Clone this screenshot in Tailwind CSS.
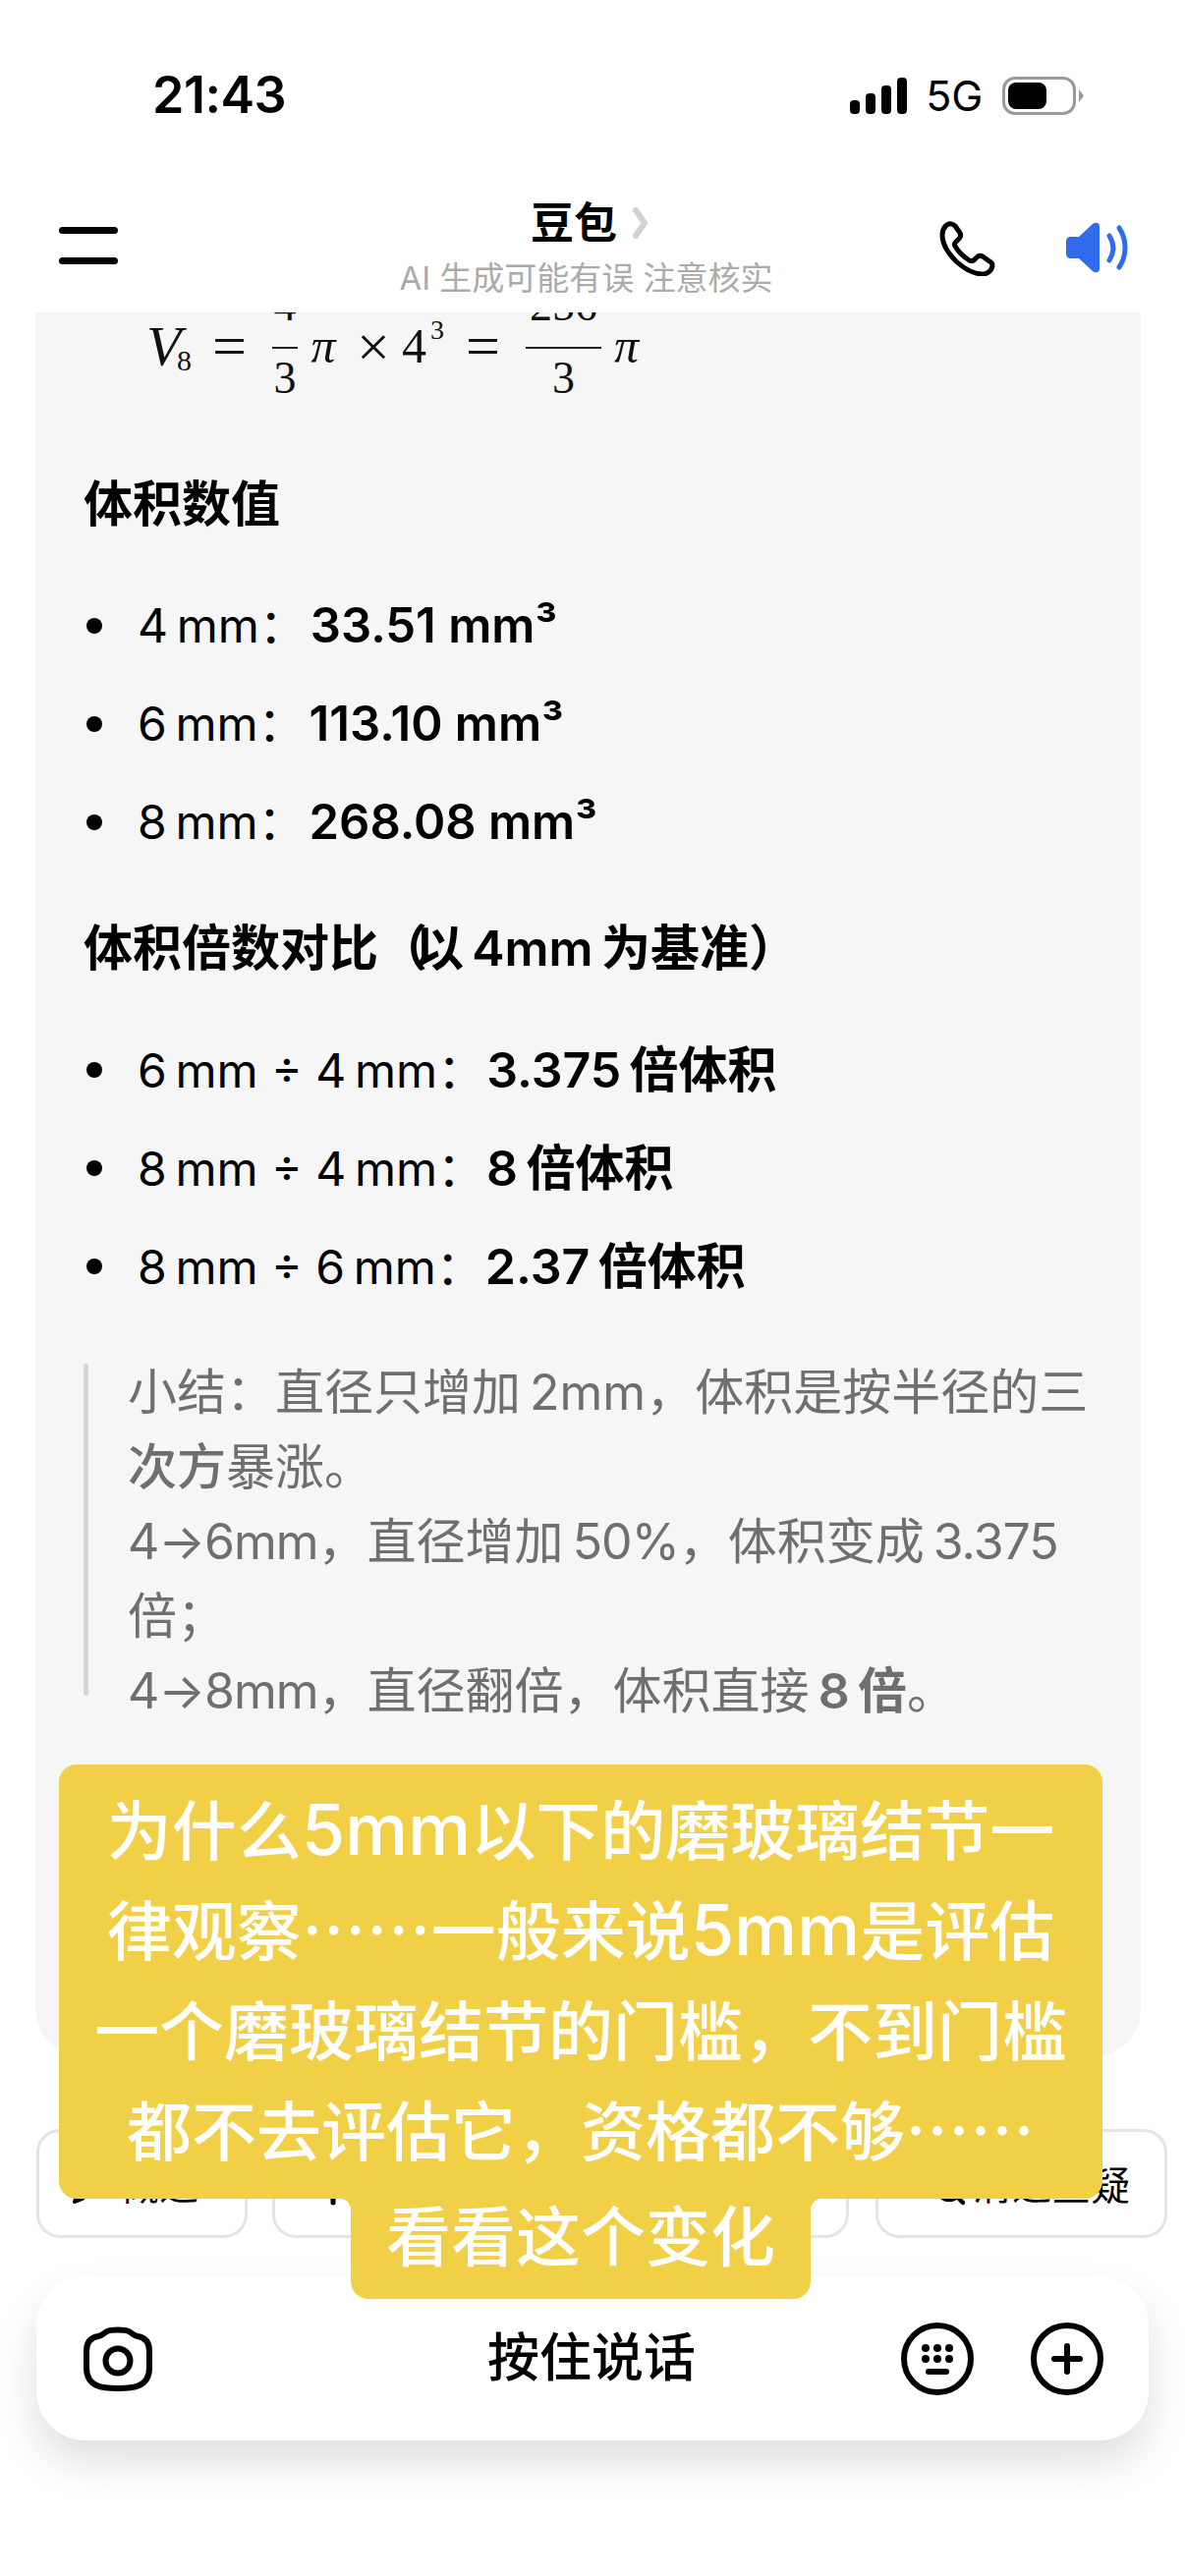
<!DOCTYPE html>
<html lang="zh-CN">
<head>
    <meta charset="UTF-8">
    <meta name="viewport" content="width=device-width, initial-scale=1.0">
    <title>豆包</title>
    <script src="https://cdn.jsdelivr.net/npm/@tailwindcss/browser@4"></script>
</head>
<body class="bg-white font-['Inter','Noto_Sans_CJK_SC',sans-serif] text-black">
<div class="relative w-[1206px] h-[2622px] overflow-hidden bg-white">

    <!-- Status bar -->
    <div class="flex items-center h-[190px] pt-[4px] pl-[155px]">
        <span class="text-[52px] leading-none font-semibold tracking-[-0.5px]">21:43</span>
        <div class="flex items-end gap-[6px] ml-[574px]">
            <div class="w-[10px] h-[14px] rounded-[4px] bg-black"></div>
            <div class="w-[10px] h-[21px] rounded-[4px] bg-black"></div>
            <div class="w-[10px] h-[29px] rounded-[4px] bg-black"></div>
            <div class="w-[10px] h-[37px] rounded-[4px] bg-black"></div>
        </div>
        <span class="ml-[19px] text-[43px] leading-none font-normal">5G</span>
        <div class="flex items-center ml-[20px]">
            <div class="w-[75px] h-[39px] box-border border-[3px] border-[#9a9a9a] rounded-[13px] p-[3px]">
                <div class="w-[39px] h-[27px] rounded-[8px] bg-black"></div>
            </div>
            <svg class="ml-[3px]" width="5" height="13" viewBox="0 0 5 13"><path d="M0 0 L5 6.5 L0 13 Z" fill="#9a9a9a"/></svg>
        </div>
    </div>

    <!-- Header -->
    <div class="flex items-start h-[128px] pl-[60px] pr-[57px]">
        <div class="flex flex-col gap-[24px] w-[60px] mt-[41px]">
            <div class="h-[7px] rounded-full bg-black"></div>
            <div class="h-[7px] rounded-full bg-black"></div>
        </div>
        <div class="flex flex-col items-center w-[377px] ml-[288px] pt-[9px]">
            <div class="flex items-center ml-[8px] h-[56px]">
                <span class="text-[44px] leading-[56px] font-semibold">豆包</span>
                <svg class="ml-[15px]" width="18" height="32" viewBox="0 0 18 32" fill="none"><path d="M4 3 L13 16 L4 29" stroke="#d2d2d2" stroke-width="6" stroke-linecap="round" stroke-linejoin="round"/></svg>
            </div>
            <span class="text-[33px] leading-[56px] text-[#ababab] whitespace-nowrap">AI 生成可能有误 注意核实</span>
        </div>
        <svg class="ml-[171px] mt-[35px]" width="57" height="56" viewBox="0 0 57 56" fill="none"><path d="M12 3 C8 2 3 7 3 14 C3 22 8 32 17 41 C26 49 36 54 44 54 C50 54 54 49 54 45 C54 43 53 42 51 41 L44 36 C42 35 40 35 38 37 L35 40 C33 41 31 41 29 39 C26 37 20 32 17 27 C15 25 15 23 17 21 L20 18 C22 16 22 14 21 12 L16 5 C15 4 14 3 12 3 Z" stroke="#000" stroke-width="5" stroke-linejoin="round"/></svg>
        <svg class="ml-[72px] mt-[36px]" width="64" height="52" viewBox="0 0 64 52" fill="none">
            <path d="M34 5 C34 0 30 0 27 2 L13 15 H5 C2 15 0 17 0 20 V32 C0 35 2 37 5 37 H13 L27 50 C30 52 34 52 34 47 Z" fill="#2f6bec"/>
            <path d="M44 14 C49 22 49 31 44 39" stroke="#2f6bec" stroke-width="5" stroke-linecap="round"/>
            <path d="M54 6 C62 18 62 34 54 46" stroke="#2f6bec" stroke-width="5" stroke-linecap="round"/>
        </svg>
    </div>

    <!-- Answer card -->
    <div class="w-[1125px] h-[1775px] ml-[36px] pl-[49px] bg-[#f6f6f6] rounded-b-[48px] overflow-hidden">
        <!-- Formula, top of it scrolled under the header -->
        <div class="flex items-center h-[136px] -mt-[32px] ml-[64px] font-['Liberation_Serif',serif] text-[46px] text-[#111]">
            <span class="italic text-[58px] w-[31px] -mt-[4px]">V</span>
            <span class="text-[30px] w-[36px] mt-[24px]">8</span>
            <span class="w-[34px] text-center text-[62px] -mt-[3px]">=</span>
            <div class="flex flex-col items-center w-[26px] ml-[27px]">
                <span class="leading-[50px] h-[50px] mb-[17px]">4</span>
                <div class="w-full h-[2px] bg-[#222]"></div>
                <span class="leading-[50px] h-[50px] mt-[5px] mb-[12px]">3</span>
            </div>
            <span class="w-[26px] ml-[13px] text-center italic text-[50px] leading-none -mt-[4px]">π</span>
            <span class="w-[25px] ml-[21px] text-center text-[60px] leading-none -mt-[3px]">×</span>
            <span class="ml-[21px] text-[50px] -mt-[3px]">4</span>
            <span class="text-[28px] -mt-[36px] ml-[4px]">3</span>
            <span class="w-[34px] ml-[22px] text-center text-[62px] -mt-[3px]">=</span>
            <div class="flex flex-col items-center w-[77px] ml-[27px]">
                <span class="leading-[50px] h-[50px] mb-[17px]">256</span>
                <div class="w-full h-[2px] bg-[#222]"></div>
                <span class="leading-[50px] h-[50px] mt-[5px] mb-[12px]">3</span>
            </div>
            <span class="w-[27px] ml-[12px] text-center italic text-[50px] leading-none -mt-[4px]">π</span>
        </div>

        <h3 class="mt-[53px] text-[50px] leading-[76px] font-semibold">体积数值</h3>
        <ul class="mt-[48px] flex flex-col gap-[24px] text-[48px] leading-[76px]">
            <li class="flex items-center h-[76px]"><span class="w-[16px] h-[16px] ml-[3px] mr-[36px] rounded-full bg-black"></span><span>4&thinsp;mm：<b class="ml-[4px] font-semibold text-[49px]">33.51 mm³</b></span></li>
            <li class="flex items-center h-[76px]"><span class="w-[16px] h-[16px] ml-[3px] mr-[36px] rounded-full bg-black"></span><span>6&thinsp;mm：<b class="ml-[4px] font-semibold text-[49px]">113.10 mm³</b></span></li>
            <li class="flex items-center h-[76px]"><span class="w-[16px] h-[16px] ml-[3px] mr-[36px] rounded-full bg-black"></span><span>8&thinsp;mm：<b class="ml-[4px] font-semibold text-[49px]">268.08 mm³</b></span></li>
        </ul>

        <h3 class="mt-[52px] text-[50px] leading-[76px] font-semibold">体积倍数对比<span class="tracking-[-13px]">（</span>以&thinsp;4mm&thinsp;为基准）</h3>
        <ul class="mt-[48px] flex flex-col gap-[24px] text-[48px] leading-[76px]">
            <li class="flex items-center h-[76px]"><span class="w-[16px] h-[16px] ml-[3px] mr-[36px] rounded-full bg-black"></span><span>6&thinsp;mm ÷ 4&thinsp;mm：<b class="ml-[2px] font-semibold text-[50px]">3.375&thinsp;倍体积</b></span></li>
            <li class="flex items-center h-[76px]"><span class="w-[16px] h-[16px] ml-[3px] mr-[36px] rounded-full bg-black"></span><span>8&thinsp;mm ÷ 4&thinsp;mm：<b class="ml-[2px] font-semibold text-[50px]">8&thinsp;倍体积</b></span></li>
            <li class="flex items-center h-[76px]"><span class="w-[16px] h-[16px] ml-[3px] mr-[36px] rounded-full bg-black"></span><span>8&thinsp;mm ÷ 6&thinsp;mm：<b class="ml-[2px] font-semibold text-[50px]">2.37&thinsp;倍体积</b></span></li>
        </ul>

        <blockquote class="flex items-start mt-[52px]">
            <div class="w-[5px] h-[338px] mt-[9px] rounded-full bg-[#d5d5d5] shrink-0"></div>
            <p class="ml-[40px] text-[50px] leading-[76px] text-[#6f6f6f] whitespace-nowrap">小结：直径只增加&thinsp;2mm，体积是按半径的三<br><b class="font-medium">次方</b>暴涨。<br><span class="tracking-[-1px]">4→6mm</span>，直径增加&thinsp;<span class="tracking-[-1px]">50%</span>，体积变成&thinsp;<span class="tracking-[-1px]">3.375</span><br>倍；<br><span class="tracking-[-1px]">4→8mm</span>，直径翻倍，体积直接&thinsp;<b class="font-semibold">8&thinsp;倍</b>。</p>
        </blockquote>
    </div>

    <!-- Suggestion chips -->
    <div class="flex mt-[74px] ml-[37px] h-[111px] text-[40px]">
        <div class="flex items-center w-[215px] box-border border-[3px] border-[#e4e4e4] rounded-[24px] pl-[30px] pt-[4px]">
            <svg width="34" height="40" viewBox="0 0 34 40" fill="none"><path d="M6 36 L9 28 L26 9 L31 14 L14 33 Z" stroke="#000" stroke-width="4" stroke-linejoin="round"/></svg>
            <span class="ml-[18px] whitespace-nowrap">概述</span>
            <svg class="ml-[12px] mt-[6px]" width="8" height="14" viewBox="0 0 8 14" fill="none"><path d="M1 1 L7 7 L1 13" stroke="#000" stroke-width="2"/></svg>
        </div>
        <div class="flex items-center w-[587px] ml-[25px] box-border border-[3px] border-[#e4e4e4] rounded-[24px] pl-[44px] pt-[4px]">
            <svg width="30" height="40" viewBox="0 0 30 40" fill="none"><path d="M15 4 V37" stroke="#000" stroke-width="5" stroke-linecap="round"/><path d="M4 16 H26" stroke="#000" stroke-width="4" stroke-linecap="round"/></svg>
            <span class="ml-[20px] whitespace-nowrap">帮我继续深入解释</span>
        </div>
        <div class="flex items-center justify-end w-[297px] ml-[27px] box-border border-[3px] border-[#e4e4e4] rounded-[24px] pr-[35px] pt-[4px]">
            <svg width="30" height="40" viewBox="0 0 30 40" fill="none"><circle cx="14" cy="22" r="12" stroke="#000" stroke-width="4.5"/><path d="M22 31 L28 37" stroke="#000" stroke-width="4.5" stroke-linecap="round"/></svg>
            <span class="ml-[8px] whitespace-nowrap">清退查疑</span>
        </div>
    </div>

    <!-- Input bar -->
    <div class="flex items-center w-[1132px] h-[167px] mt-[39px] ml-[37px] pl-[48px] pr-[46px] bg-white rounded-[50px] shadow-[0_22px_46px_rgba(0,0,0,0.13)]">
        <svg width="70" height="66" viewBox="0 0 70 66" fill="none">
            <path d="M35 63 C20 63 3 62 3 42 V25 C3 14 9 11 15 10 C20 9 21 6 24 5 C27 3 43 3 46 5 C49 6 50 9 55 10 C61 11 67 14 67 25 V42 C67 62 50 63 35 63 Z" stroke="#000" stroke-width="6" stroke-linejoin="round"/>
            <circle cx="35" cy="35" r="12.5" stroke="#000" stroke-width="6"/>
        </svg>
        <span class="ml-[341px] text-[53px] leading-none font-medium whitespace-nowrap">按住说话</span>
        <svg class="ml-auto" width="74" height="74" viewBox="0 0 74 74" fill="none">
            <circle cx="37" cy="37" r="34" stroke="#000" stroke-width="6"/>
            <circle cx="25" cy="26" r="4" fill="#000"/><circle cx="37" cy="26" r="4" fill="#000"/><circle cx="49" cy="26" r="4" fill="#000"/>
            <circle cx="25" cy="37" r="4" fill="#000"/><circle cx="37" cy="37" r="4" fill="#000"/><circle cx="49" cy="37" r="4" fill="#000"/>
            <path d="M28 50 H46" stroke="#000" stroke-width="6" stroke-linecap="round"/>
        </svg>
        <svg class="ml-[58px]" width="74" height="74" viewBox="0 0 74 74" fill="none">
            <circle cx="37" cy="37" r="34" stroke="#000" stroke-width="6"/>
            <path d="M37 24 V50 M24 37 H50" stroke="#000" stroke-width="6" stroke-linecap="round"/>
        </svg>
    </div>

    <!-- Video caption lying over the page -->
    <div class="absolute left-[60px] top-[1796px] w-[1062px] flex flex-col items-center text-white text-[66px] leading-[102px] font-medium text-center font-['Noto_Sans_CJK_SC',sans-serif]">
        <div class="w-full h-[442px] pt-[12px] bg-[#f1cf47] rounded-[18px] whitespace-nowrap">
            为什么<span class="font-['Inter'] text-[72px] leading-none">5mm</span>以下的磨玻璃结节一<br>律观察……一般来说<span class="font-['Inter'] text-[72px] leading-none">5mm</span>是评估<br>一个磨玻璃结节的门槛，不到门槛<br>都不去评估它，资格都不够……
        </div>
        <div class="relative w-[468px] h-[103px] -mt-[1px] bg-[#f1cf47] rounded-b-[18px]">
            <span class="block -mt-[16px] whitespace-nowrap">看看这个变化</span>
            <div class="absolute -left-[12px] top-[1px] w-[12px] h-[12px] bg-[radial-gradient(circle_at_0_100%,transparent_12px,#f1cf47_12.5px)]"></div>
            <div class="absolute -right-[12px] top-[1px] w-[12px] h-[12px] bg-[radial-gradient(circle_at_100%_100%,transparent_12px,#f1cf47_12.5px)]"></div>
        </div>
    </div>
</div>
</body>
</html>
